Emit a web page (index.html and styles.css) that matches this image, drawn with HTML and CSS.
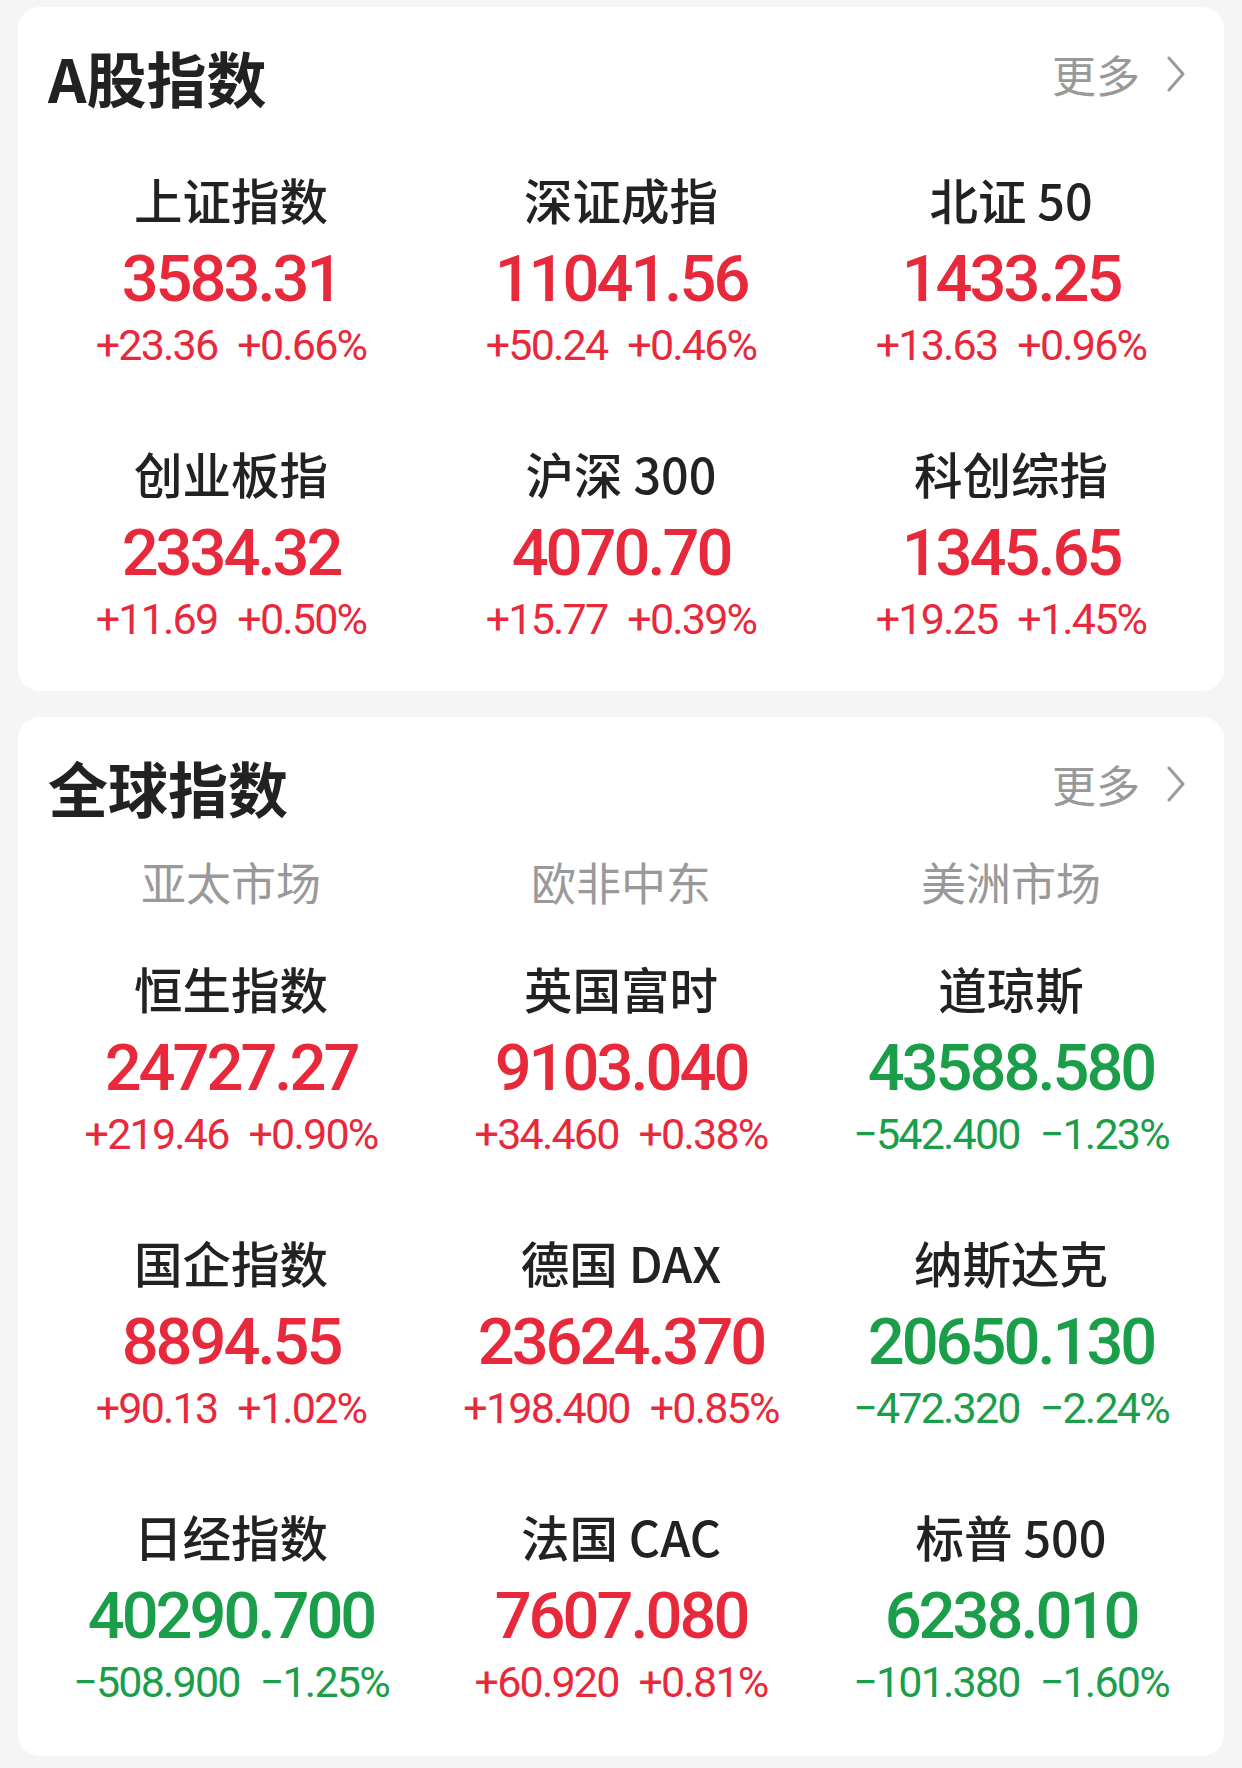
FILE: index.html
```html
<!DOCTYPE html>
<html lang="zh-CN">
<head>
<meta charset="utf-8">
<title>指数</title>
<link rel="stylesheet" href="styles.css">
</head>
<body>
<div class="page">
  <section class="card card-a">
    <div class="card-head">
      <h2 class="card-title">A股指数</h2>
      <div class="more">更多<svg class="chev" viewBox="0 0 20 36" width="20" height="36"><path d="M3 2 L17 18 L3 34" fill="none" stroke="#9a9a9a" stroke-width="3" stroke-linecap="round" stroke-linejoin="round"/></svg></div>
    </div>
    <div class="grid grid-a">
      <div class="cell up"><div class="name">上证指数</div><div class="val">3583.31</div><div class="chg"><span>+23.36</span><span>+0.66%</span></div></div>
      <div class="cell up"><div class="name">深证成指</div><div class="val">11041.56</div><div class="chg"><span>+50.24</span><span>+0.46%</span></div></div>
      <div class="cell up"><div class="name">北证 50</div><div class="val">1433.25</div><div class="chg"><span>+13.63</span><span>+0.96%</span></div></div>
      <div class="cell up"><div class="name">创业板指</div><div class="val">2334.32</div><div class="chg"><span>+11.69</span><span>+0.50%</span></div></div>
      <div class="cell up"><div class="name">沪深 300</div><div class="val">4070.70</div><div class="chg"><span>+15.77</span><span>+0.39%</span></div></div>
      <div class="cell up"><div class="name">科创综指</div><div class="val">1345.65</div><div class="chg"><span>+19.25</span><span>+1.45%</span></div></div>
    </div>
  </section>

  <section class="card card-g">
    <div class="card-head">
      <h2 class="card-title">全球指数</h2>
      <div class="more">更多<svg class="chev" viewBox="0 0 20 36" width="20" height="36"><path d="M3 2 L17 18 L3 34" fill="none" stroke="#9a9a9a" stroke-width="3" stroke-linecap="round" stroke-linejoin="round"/></svg></div>
    </div>
    <div class="tabs">
      <div class="tab">亚太市场</div>
      <div class="tab">欧非中东</div>
      <div class="tab">美洲市场</div>
    </div>
    <div class="grid grid-g">
      <div class="cell up"><div class="name">恒生指数</div><div class="val">24727.27</div><div class="chg"><span>+219.46</span><span>+0.90%</span></div></div>
      <div class="cell up"><div class="name">英国富时</div><div class="val">9103.040</div><div class="chg"><span>+34.460</span><span>+0.38%</span></div></div>
      <div class="cell down"><div class="name">道琼斯</div><div class="val">43588.580</div><div class="chg"><span>−542.400</span><span>−1.23%</span></div></div>
      <div class="cell up"><div class="name">国企指数</div><div class="val">8894.55</div><div class="chg"><span>+90.13</span><span>+1.02%</span></div></div>
      <div class="cell up"><div class="name">德国 DAX</div><div class="val">23624.370</div><div class="chg"><span>+198.400</span><span>+0.85%</span></div></div>
      <div class="cell down"><div class="name">纳斯达克</div><div class="val">20650.130</div><div class="chg"><span>−472.320</span><span>−2.24%</span></div></div>
      <div class="cell down"><div class="name">日经指数</div><div class="val">40290.700</div><div class="chg"><span>−508.900</span><span>−1.25%</span></div></div>
      <div class="cell up"><div class="name">法国 CAC</div><div class="val">7607.080</div><div class="chg"><span>+60.920</span><span>+0.81%</span></div></div>
      <div class="cell down"><div class="name">标普 500</div><div class="val">6238.010</div><div class="chg"><span>−101.380</span><span>−1.60%</span></div></div>
    </div>
  </section>
</div>
</body>
</html>
```

FILE: styles.css
```css
* { box-sizing: border-box; }
html, body {
  margin: 0;
  padding: 0;
  background: #f5f5f5;
}
body {
  width: 1242px;
  height: 1768px;
  overflow: hidden;
  font-family: "Noto Sans CJK SC", "Noto Sans", sans-serif;
  color: #222;
}
.page {
  padding: 7px 18px 0 18px;
  display: flex;
  flex-direction: column;
  gap: 26px;
}
.card {
  background: #fff;
  border-radius: 22px;
  padding-top: 35px;
}
.card-a { height: 684px; }
.card-g { height: 1039px; }

.card-head {
  height: 70px;
  display: flex;
  align-items: center;
  justify-content: space-between;
  padding: 0 38px 0 30px;
}
.card-title {
  margin: 0;
  font-size: 60px;
  font-weight: 700;
  line-height: 70px;
  color: #222;
}
.more {
  display: flex;
  align-items: center;
  gap: 26px;
  font-size: 44px;
  color: #999;
  line-height: 60px;
  margin-top: -6px;
}
.chev { display: block; }

.tabs {
  margin-top: 30px;
  height: 60px;
  display: grid;
  grid-template-columns: repeat(3, 1fr);
  padding: 0 18px;
}
.tab {
  text-align: center;
  font-size: 45px;
  line-height: 60px;
  color: #999;
  font-weight: 400;
}

.grid {
  display: grid;
  grid-template-columns: repeat(3, 1fr);
  padding: 0 18px;
  row-gap: 72px;
}
.grid-a { margin-top: 52px; }
.grid-g { margin-top: 41px; }

.cell {
  display: flex;
  flex-direction: column;
  align-items: center;
  height: 202px;
}
.name {
  height: 70px;
  line-height: 70px;
  font-size: 48.5px;
  font-weight: 500;
  color: #222;
  white-space: nowrap;
}
.val {
  height: 90px;
  line-height: 90px;
  font-family: Roboto, "Liberation Sans", sans-serif;
  font-size: 65px;
  font-weight: 500;
  letter-spacing: -3px;
  white-space: nowrap;
}
.chg {
  height: 42px;
  line-height: 42px;
  font-family: Roboto, "Liberation Sans", sans-serif;
  font-size: 43px;
  font-weight: 400;
  letter-spacing: -1.8px;
  display: flex;
  gap: 20px;
  white-space: nowrap;
}
.up .val, .up .chg { color: #e8293b; }
.down .val, .down .chg { color: #1a9e4a; }
```
